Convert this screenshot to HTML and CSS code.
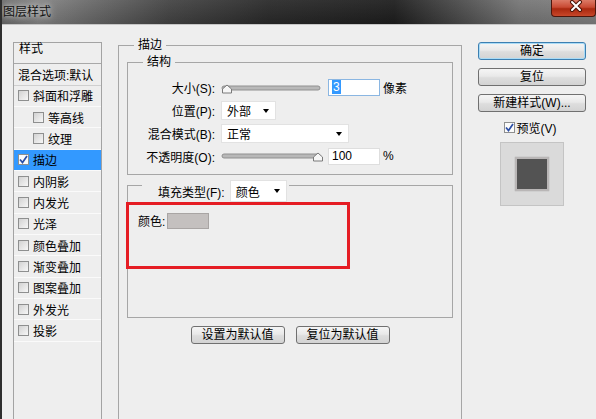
FILE: index.html
```html
<!DOCTYPE html>
<html lang="zh-CN">
<head>
  <meta charset="UTF-8">
  <title>图层样式</title>
  <link rel="stylesheet" href="styles.css">
</head>
<body>

  <div class="window">

    <!-- 标题栏 -->
    <div class="titlebar">
      <span class="title-text">图层样式</span>
      <div class="close-btn">
        <svg width="45" height="16" viewBox="0 0 45 16">
          <path d="M21 2 L29 10 M29 2 L21 10" stroke="#4a1408" stroke-width="4" stroke-linecap="round"/>
          <path d="M21 2 L29 10 M29 2 L21 10" stroke="#ffffff" stroke-width="2" stroke-linecap="round"/>
        </svg>
      </div>
    </div>

    <div class="content">

      <!-- 左侧样式列表 -->
      <ul class="style-list">
        <li class="list-head">样式</li>
        <li class="list-blend">混合选项:默认</li>
        <li><span class="chk"></span>斜面和浮雕</li>
        <li class="sub"><span class="chk"></span>等高线</li>
        <li class="sub"><span class="chk"></span>纹理</li>
        <li class="active">
          <span class="chk on"><svg width="9" height="9" viewBox="0 0 9 9"><path d="M1 4.5 L3.5 7.5 L8 1" fill="none" stroke="#2b4ea6" stroke-width="1.7"/></svg></span>描边
        </li>
        <li><span class="chk"></span>内阴影</li>
        <li><span class="chk"></span>内发光</li>
        <li><span class="chk"></span>光泽</li>
        <li><span class="chk"></span>颜色叠加</li>
        <li><span class="chk"></span>渐变叠加</li>
        <li><span class="chk"></span>图案叠加</li>
        <li><span class="chk"></span>外发光</li>
        <li><span class="chk"></span>投影</li>
        <li class="empty"></li>
      </ul>

      <!-- 描边 -->
      <div class="group main-group">
        <div class="group-title">描边</div>

        <div class="group struct-group">
          <div class="group-title">结构</div>
          <div class="rows">
            <div class="row">
              <span class="row-label">大小(S):</span>
              <svg class="slider" width="104" height="12" viewBox="0 0 104 12">
                <rect x="1" y="4" width="98" height="4" rx="2" fill="#b8b8b8" stroke="#909090" stroke-width="1"/>
                <polygon points="1.5,11 1.5,7 6,3 10.5,7 10.5,11" fill="#f6f6f6" stroke="#7a7a7a"/>
              </svg>
              <span class="num focus"><span class="hl">3</span></span>
              <span class="unit">像素</span>
            </div>
            <div class="row">
              <span class="row-label">位置(P):</span>
              <div class="select pos-select"><span>外部</span><i class="arrow"></i></div>
            </div>
            <div class="row">
              <span class="row-label">混合模式(B):</span>
              <div class="select mode-select"><span>正常</span><i class="arrow"></i></div>
            </div>
            <div class="row">
              <span class="row-label">不透明度(O):</span>
              <svg class="slider" width="104" height="12" viewBox="0 0 104 12">
                <rect x="1" y="4" width="98" height="4" rx="2" fill="#b8b8b8" stroke="#909090" stroke-width="1"/>
                <polygon points="92.5,11 92.5,7 97,3 101.5,7 101.5,11" fill="#f6f6f6" stroke="#7a7a7a"/>
              </svg>
              <span class="num">100</span>
              <span class="unit">%</span>
            </div>
          </div>
        </div>

        <div class="group fill-group">
          <div class="fill-title">
            <span>填充类型(F):</span>
            <div class="select fill-select"><span>颜色</span><i class="arrow"></i></div>
          </div>
          <div class="color-row">
            <span>颜色:</span>
            <span class="swatch"></span>
          </div>
          <div class="mark"></div>
        </div>

        <div class="btn-row">
          <div class="btn">设置为默认值</div>
          <div class="btn">复位为默认值</div>
        </div>
      </div>

      <!-- 右侧按钮 -->
      <div class="side">
        <div class="btn default">确定</div>
        <div class="btn">复位</div>
        <div class="btn last">新建样式(W)...</div>
        <div class="preview-check">
          <span class="chk on"><svg width="9" height="9" viewBox="0 0 9 9"><path d="M1 4.5 L3.5 7.5 L8 1" fill="none" stroke="#2b4ea6" stroke-width="1.7"/></svg></span>预览(V)
        </div>
        <div class="preview">
          <div class="pv-square"></div>
        </div>
      </div>

    </div>
  </div>

</body>
</html>
```

FILE: styles.css
```css
* {
  margin: 0;
  padding: 0;
  box-sizing: border-box;
}

body {
  background: #eeeeee;
  font-family: "Liberation Sans", "Noto Sans CJK SC", sans-serif;
  font-size: 12px;
  color: #000;
  overflow: hidden;
}

.window {
  width: 596px;
  height: 419px;
  border-left: 2px solid #2e2e2e;
  background: #eeeeee;
  overflow: hidden;
}

/* 标题栏 */
.titlebar {
  height: 25px;
  display: flex;
  justify-content: space-between;
  align-items: flex-start;
  border-bottom: 1px solid #c6c6c6;
  background:
    linear-gradient(180deg, rgba(255,255,255,0.06), rgba(0,0,0,0.12)),
    linear-gradient(90deg, #6a6a6a 0%, #858585 6%, #6c6c6c 14%, #444 28%, #2a2a2a 45%, #1e1e1e 66%, #474747 76%, #767676 87%, #808080 100%);
}

.title-text {
  margin: 4px 0 0 1px;
  line-height: 16px;
  color: #111;
  text-shadow: 0 0 5px rgba(255,255,255,0.7), 0 0 8px rgba(255,255,255,0.5);
}

.close-btn {
  width: 45px;
  height: 17px;
  border: 1px solid #4d160c;
  border-top: none;
  border-radius: 0 0 4px 4px;
  background: linear-gradient(#dc7a66, #c94a33 45%, #a9280f 55%, #c8472a);
}

.close-btn svg {
  display: block;
  margin-left: -1px;
}

.content {
  display: flex;
  align-items: flex-start;
}

/* 左侧列表 */
.style-list {
  list-style: none;
  width: 89px;
  height: 400px;
  margin: 17px 0 0 11px;
  border: 1px solid #a3a3a3;
  background: #eeeeee;
}

.style-list li {
  height: 21.35px;
  display: flex;
  align-items: center;
  padding-left: 4px;
  border-bottom: 1px solid #fafafa;
  white-space: nowrap;
}

.style-list .list-head {
  align-items: flex-start;
  line-height: 12px;
  padding-left: 5px;
  border-bottom-color: #a8a8a8;
}

.style-list .list-blend {
  border-bottom-color: #cfcfcf;
}

.style-list .sub {
  padding-left: 19px;
}

.style-list .active {
  background: #3399ff;
}

.style-list .empty {
  border-bottom: none;
}

.chk {
  width: 11px;
  height: 11px;
  flex: none;
  margin-right: 4px;
  border: 1px solid #8e8f8f;
  background: linear-gradient(135deg, #d2d2d2, #f7f7f7);
}

.chk.on {
  background: #fbfbfb;
  display: flex;
  align-items: center;
  justify-content: center;
}

.chk svg {
  display: block;
}

/* 分组框 */
.group {
  border: 1px solid #a6a6a6;
}

.group-title {
  width: fit-content;
  line-height: 14px;
  padding: 0 4px;
  margin: -8px 0 0 15px;
  background: #eeeeee;
}

.main-group {
  width: 344px;
  height: 420px;
  margin: 20px 0 0 16px;
}

.struct-group {
  margin: 10px 8px 0;
  padding-bottom: 7px;
}

.rows {
  margin-top: 7px;
}

.row {
  display: flex;
  align-items: center;
  height: 23px;
}

.row:last-child {
  height: 22px;
}

.row-label {
  width: 87px;
  margin-right: 6px;
  text-align: right;
  white-space: nowrap;
}

.slider {
  display: block;
  flex: none;
}

.num {
  width: 52px;
  height: 17px;
  margin-left: 3px;
  padding-left: 3px;
  line-height: 15px;
  background: #fff;
  border: 1px solid #dedede;
}

.num.focus {
  border-color: #8ab6e2;
}

.num .hl {
  background: #3399ff;
  color: #fff;
  padding: 0 1px;
}

.unit {
  margin-left: 3px;
}

.select {
  height: 19px;
  display: flex;
  align-items: center;
  justify-content: space-between;
  padding: 0 6px 0 5px;
  background: #fff;
  border: 1px solid #e2e2e2;
}

.arrow {
  width: 0;
  height: 0;
  border-left: 3.5px solid transparent;
  border-right: 3.5px solid transparent;
  border-top: 4px solid #000;
}

.pos-select {
  width: 55px;
}

.mode-select {
  width: 128px;
}

/* 填充类型 */
.fill-group {
  position: relative;
  height: 133px;
  margin: 10px 8px 0;
}

.fill-title {
  width: fit-content;
  height: 22px;
  display: flex;
  align-items: center;
  margin: -6px 0 0 14px;
  padding: 0 2px 0 16px;
  background: #eeeeee;
}

.fill-select {
  width: 57px;
  height: 22px;
  margin-left: 5px;
}

.color-row {
  display: flex;
  align-items: center;
  margin-top: 10px;
  padding-left: 10px;
}

.swatch {
  width: 42px;
  height: 16px;
  margin-left: 2px;
  background: #c4c0bf;
  border: 1px solid #a9a5a4;
}

.mark {
  position: absolute;
  left: -2px;
  top: 16px;
  width: 224px;
  height: 67px;
  border: 3px solid #e51c23;
}

/* 按钮 */
.btn-row {
  display: flex;
  justify-content: center;
  gap: 11px;
  margin-top: 8px;
}

.btn {
  width: 94px;
  height: 18px;
  line-height: 16px;
  text-align: center;
  white-space: nowrap;
  border: 1px solid #707070;
  border-radius: 3px;
  background: linear-gradient(#f5f5f5, #e9e9e9 45%, #dddddd 55%, #d3d3d3);
}

.side {
  width: 108px;
  margin: 17px 0 0 16px;
  display: flex;
  flex-direction: column;
  align-items: center;
}

.side .btn {
  width: 108px;
  margin-bottom: 8px;
}

.side .btn.last {
  margin-bottom: 7px;
}

.btn.default {
  border-color: #3c7fb1;
  box-shadow: inset 0 0 0 1px #a9dbf6;
}

.preview-check {
  height: 16px;
  display: flex;
  align-items: center;
  margin-right: 4px;
}

.preview-check .chk {
  margin-right: 2px;
}

.preview {
  width: 64px;
  height: 64px;
  margin-top: 7px;
  display: flex;
  align-items: center;
  justify-content: center;
  background: #dadada;
  border: 1px solid #c4c4c4;
}

.pv-square {
  width: 34px;
  height: 34px;
  background: #535353;
  border: 2px solid #b9b6b6;
  box-shadow: 0 0 1px #9a9a9a;
}
```
